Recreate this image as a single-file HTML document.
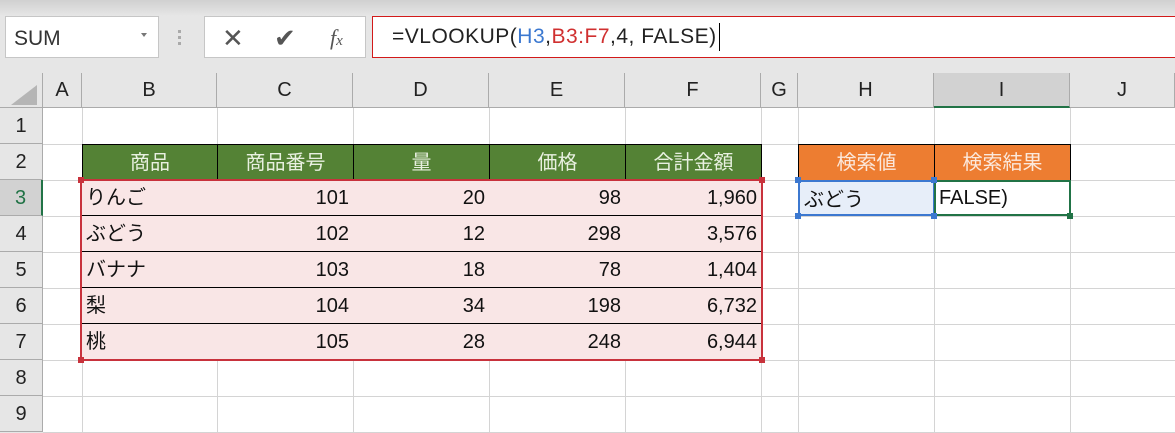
<!DOCTYPE html>
<html><head><meta charset="utf-8"><style>
*{margin:0;padding:0;box-sizing:border-box}
body{width:1175px;height:433px;overflow:hidden;background:#e6e6e6;font-family:"Liberation Sans","Noto Sans CJK JP",sans-serif;position:relative}
.a{position:absolute}
.top{left:0;top:0;width:1175px;height:16px;background:linear-gradient(#d0d0d0,#e6e6e6)}
.box{background:#fff;border:1px solid #c6c6c6}
.ch{top:73px;height:35px;font-size:20px;color:#222;text-align:center;line-height:35px;border-right:1px solid #ababab;border-bottom:1px solid #ababab}
.rh{left:0;width:43px;height:36px;font-size:20px;color:#222;text-align:center;line-height:36px;border-bottom:1px solid #ababab;border-right:1px solid #ababab;background:#e6e6e6}
.grid{left:43px;top:108px;width:1132px;height:325px;background:#fff}
.vl{top:108px;width:1px;height:325px;background:#d4d4d4}
.hl{left:43px;width:1132px;height:1px;background:#d4d4d4}
.c{height:36px;font-size:20px;line-height:36px;padding:0 4px;color:#111;white-space:nowrap}
.g{background:#548235;color:#e8f0e0;text-align:center;border:1px solid #000}
.o{background:#ed7d31;color:#fbe8dc;text-align:center;border:1px solid #000}
.p{background:#f9e6e6;border-right:1px solid #000;border-bottom:1px solid #000}
.r{text-align:right}
</style></head><body>
<div class="a top"></div>
<div class="a box" style="left:5px;top:16px;width:154px;height:42px"></div>
<div class="a" style="left:14px;top:27px;font-size:21px;color:#333">SUM</div>
<div class="a" style="left:141px;top:33px;width:0;height:0;border-left:3px solid transparent;border-right:3px solid transparent;border-top:4px solid #777"></div>
<div class="a" style="left:178px;top:30px;width:3px;height:3px;background:#aaa;box-shadow:0 6px #aaa,0 12px #aaa"></div>
<div class="a box" style="left:204px;top:16px;width:162px;height:42px"></div>
<div class="a" style="left:222px;top:23px;font-size:26px;color:#555">✕</div>
<div class="a" style="left:274px;top:23px;font-size:26px;color:#555">✔</div>
<div class="a" style="left:330px;top:25px;font-size:22px;color:#555;font-family:'Liberation Serif',serif;font-style:italic">f<span style="font-size:15px">x</span></div>
<div class="a" style="left:372px;top:16px;width:803px;height:42px;background:#fff;border:1px solid #d21a1a;border-right:none"></div>
<div class="a" style="left:392px;top:25px;font-size:21px;color:#222;letter-spacing:0.5px">=VLOOKUP(<span style="color:#3b78d0">H3</span>,<span style="color:#d03030">B3:F7</span>,4, FALSE)</div>
<div class="a" style="left:719px;top:23px;width:1px;height:28px;background:#000"></div>

<div class="a" style="left:0;top:73px;width:43px;height:35px;border-right:1px solid #ababab;border-bottom:1px solid #ababab"></div>
<div class="a" style="left:11px;top:85px;width:0;height:0;border-left:26px solid transparent;border-bottom:20px solid #b5b5b5"></div>
<div class="a ch" style="left:43px;width:39px">A</div>
<div class="a ch" style="left:82px;width:135px">B</div>
<div class="a ch" style="left:217px;width:136px">C</div>
<div class="a ch" style="left:353px;width:136px">D</div>
<div class="a ch" style="left:489px;width:136px">E</div>
<div class="a ch" style="left:625px;width:136px">F</div>
<div class="a ch" style="left:761px;width:37px">G</div>
<div class="a ch" style="left:798px;width:136px">H</div>
<div class="a ch" style="left:934px;width:136px;background:#d2d2d2;border-bottom:2px solid #217346">I</div>
<div class="a ch" style="left:1070px;width:105px">J</div>

<div class="a grid"></div>
<div class="a vl" style="left:82px"></div><div class="a vl" style="left:217px"></div><div class="a vl" style="left:353px"></div><div class="a vl" style="left:489px"></div><div class="a vl" style="left:625px"></div><div class="a vl" style="left:761px"></div><div class="a vl" style="left:798px"></div><div class="a vl" style="left:934px"></div><div class="a vl" style="left:1070px"></div>
<div class="a hl" style="top:144px"></div><div class="a hl" style="top:180px"></div><div class="a hl" style="top:216px"></div><div class="a hl" style="top:252px"></div><div class="a hl" style="top:288px"></div><div class="a hl" style="top:324px"></div><div class="a hl" style="top:360px"></div><div class="a hl" style="top:396px"></div><div class="a hl" style="top:432px"></div>

<div class="a rh" style="top:108px">1</div>
<div class="a rh" style="top:144px">2</div>
<div class="a rh" style="top:180px;background:#d2d2d2;color:#217346;border-right:2px solid #217346">3</div>
<div class="a rh" style="top:216px">4</div>
<div class="a rh" style="top:252px">5</div>
<div class="a rh" style="top:288px">6</div>
<div class="a rh" style="top:324px">7</div>
<div class="a rh" style="top:360px">8</div>
<div class="a rh" style="top:396px">9</div>

<div class="a c g" style="left:82px;top:144px;width:136px;height:37px">商品</div>
<div class="a c g" style="left:217px;top:144px;width:137px;height:37px">商品番号</div>
<div class="a c g" style="left:353px;top:144px;width:137px;height:37px">量</div>
<div class="a c g" style="left:489px;top:144px;width:137px;height:37px">価格</div>
<div class="a c g" style="left:625px;top:144px;width:137px;height:37px">合計金額</div>

<div class="a" style="left:82px;top:180px;width:680px;height:180px;background:#f9e6e6"></div>
<div class="a c p" style="left:82px;top:180px;width:136px">りんご</div><div class="a c p r" style="left:217px;top:180px;width:137px">101</div><div class="a c p r" style="left:353px;top:180px;width:137px">20</div><div class="a c p r" style="left:489px;top:180px;width:137px">98</div><div class="a c p r" style="left:625px;top:180px;width:137px">1,960</div>
<div class="a c p" style="left:82px;top:216px;width:136px">ぶどう</div><div class="a c p r" style="left:217px;top:216px;width:137px">102</div><div class="a c p r" style="left:353px;top:216px;width:137px">12</div><div class="a c p r" style="left:489px;top:216px;width:137px">298</div><div class="a c p r" style="left:625px;top:216px;width:137px">3,576</div>
<div class="a c p" style="left:82px;top:252px;width:136px">バナナ</div><div class="a c p r" style="left:217px;top:252px;width:137px">103</div><div class="a c p r" style="left:353px;top:252px;width:137px">18</div><div class="a c p r" style="left:489px;top:252px;width:137px">78</div><div class="a c p r" style="left:625px;top:252px;width:137px">1,404</div>
<div class="a c p" style="left:82px;top:288px;width:136px">梨</div><div class="a c p r" style="left:217px;top:288px;width:137px">104</div><div class="a c p r" style="left:353px;top:288px;width:137px">34</div><div class="a c p r" style="left:489px;top:288px;width:137px">198</div><div class="a c p r" style="left:625px;top:288px;width:137px">6,732</div>
<div class="a c p" style="left:82px;top:324px;width:136px">桃</div><div class="a c p r" style="left:217px;top:324px;width:137px">105</div><div class="a c p r" style="left:353px;top:324px;width:137px">28</div><div class="a c p r" style="left:489px;top:324px;width:137px">248</div><div class="a c p r" style="left:625px;top:324px;width:137px">6,944</div>
<div class="a" style="left:80px;top:179px;width:683px;height:182px;border:2px solid #c8323c"></div>
<div class="a" style="left:78px;top:177px;width:6px;height:6px;background:#c8323c"></div>
<div class="a" style="left:759px;top:177px;width:6px;height:6px;background:#c8323c"></div>
<div class="a" style="left:78px;top:357px;width:6px;height:6px;background:#c8323c"></div>
<div class="a" style="left:759px;top:357px;width:6px;height:6px;background:#c8323c"></div>

<div class="a c o" style="left:798px;top:144px;width:137px;height:37px">検索値</div>
<div class="a c o" style="left:934px;top:144px;width:137px;height:37px">検索結果</div>
<div class="a c" style="left:798px;top:180px;width:137px;background:#e7eef9;border:2px solid #3c78d0">ぶどう</div>
<div class="a c" style="left:934px;top:180px;width:137px;border:2px solid #217346;line-height:32px;padding-left:3px">FALSE)</div>
<div class="a" style="left:795px;top:177px;width:6px;height:6px;background:#3c78d0"></div>
<div class="a" style="left:931px;top:177px;width:6px;height:6px;background:#3c78d0"></div>
<div class="a" style="left:795px;top:213px;width:6px;height:6px;background:#3c78d0"></div>
<div class="a" style="left:931px;top:213px;width:6px;height:6px;background:#3c78d0"></div>
<div class="a" style="left:1067px;top:213px;width:6px;height:6px;background:#217346"></div>
</body></html>
